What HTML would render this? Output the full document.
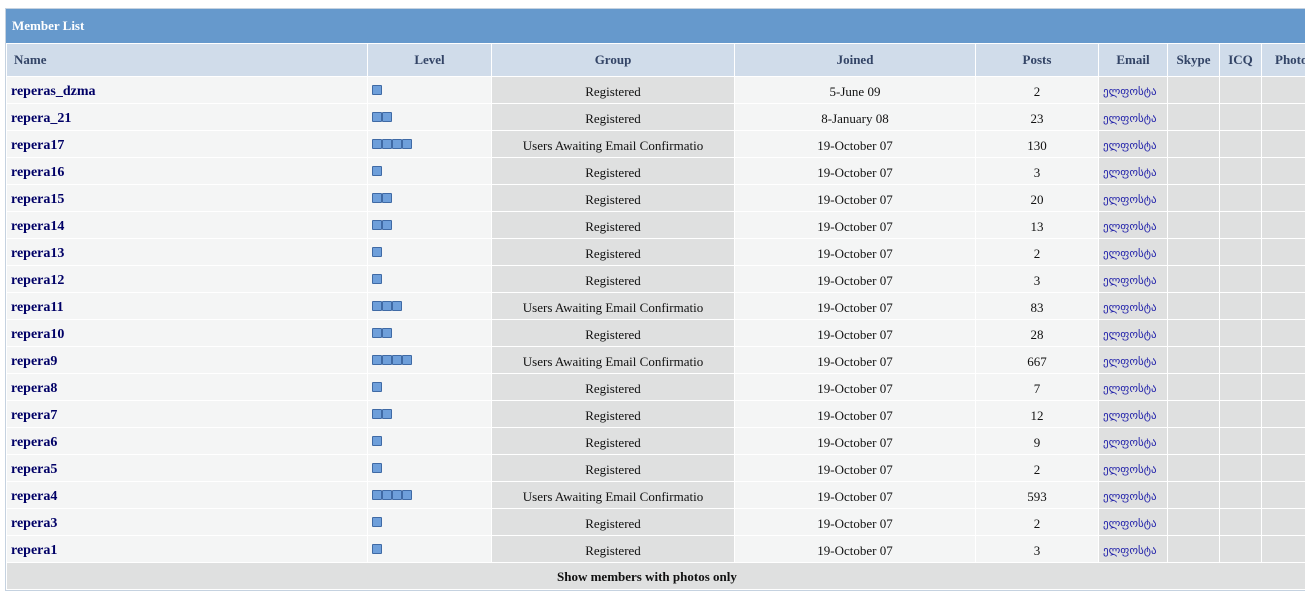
<!DOCTYPE html>
<html><head><meta charset="utf-8"><style>
body{margin:0;background:#fff;width:1305px;height:573px;overflow:hidden;font-family:"Liberation Serif","DejaVu Serif",serif;font-size:13px;}
.wrap{position:absolute;left:5px;top:8px;width:1340px;border:1px solid #c5d2e0;border-right:none;}
.title{height:34px;background:#6699cc;color:#fff;font-weight:bold;font-size:13px;line-height:34px;padding-left:6px;}
table{border-collapse:collapse;table-layout:fixed;width:1340px;}
td,th{border:1px solid #fff;height:26px;padding:0;text-align:center;color:#111;white-space:nowrap;overflow:hidden;}
td{height:23px;padding-top:3px;}
th{height:32px;background:#d0dcea;color:#334466;font-size:13px;font-weight:bold;}
th.n{text-align:left;padding-left:7px;}
tr td{background:#f4f5f5;}
td.d{background:#dfe0e0;}
td.n{text-align:left;padding-left:4px;font-weight:bold;color:#000066;font-size:14px;}
td.l{text-align:left;padding-left:4px;font-size:0;vertical-align:top;padding-top:8px;height:18px;}
td.e{text-align:left;padding-left:4px;color:#2222aa;font-family:"DejaVu Sans",sans-serif;font-size:11px;}
.p{display:inline-block;width:8px;height:8px;background:#6e9fda;border:1px solid #3f6aa5;border-radius:1px;}
.foot td{background:#dfe0e0;height:20px;font-weight:bold;}
</style></head><body>
<div class="wrap">
<div class="title">Member List</div>
<table>
<colgroup><col style="width:361px"><col style="width:124px"><col style="width:243px"><col style="width:241px"><col style="width:123px"><col style="width:69px"><col style="width:52px"><col style="width:42px"><col style="width:85px"></colgroup>
<tr><th class="n">Name</th><th>Level</th><th>Group</th><th>Joined</th><th>Posts</th><th>Email</th><th>Skype</th><th>ICQ</th><th style="text-align:left;padding-left:13px">Photo</th></tr>
<tr><td class="n">reperas_dzma</td><td class="l"><i class="p"></i></td><td class="d">Registered</td><td>5-June 09</td><td>2</td><td class="d e">ელფოსტა</td><td class="d"></td><td class="d"></td><td class="d"></td></tr>
<tr><td class="n">repera_21</td><td class="l"><i class="p"></i><i class="p"></i></td><td class="d">Registered</td><td>8-January 08</td><td>23</td><td class="d e">ელფოსტა</td><td class="d"></td><td class="d"></td><td class="d"></td></tr>
<tr><td class="n">repera17</td><td class="l"><i class="p"></i><i class="p"></i><i class="p"></i><i class="p"></i></td><td class="d">Users Awaiting Email Confirmatio</td><td>19-October 07</td><td>130</td><td class="d e">ელფოსტა</td><td class="d"></td><td class="d"></td><td class="d"></td></tr>
<tr><td class="n">repera16</td><td class="l"><i class="p"></i></td><td class="d">Registered</td><td>19-October 07</td><td>3</td><td class="d e">ელფოსტა</td><td class="d"></td><td class="d"></td><td class="d"></td></tr>
<tr><td class="n">repera15</td><td class="l"><i class="p"></i><i class="p"></i></td><td class="d">Registered</td><td>19-October 07</td><td>20</td><td class="d e">ელფოსტა</td><td class="d"></td><td class="d"></td><td class="d"></td></tr>
<tr><td class="n">repera14</td><td class="l"><i class="p"></i><i class="p"></i></td><td class="d">Registered</td><td>19-October 07</td><td>13</td><td class="d e">ელფოსტა</td><td class="d"></td><td class="d"></td><td class="d"></td></tr>
<tr><td class="n">repera13</td><td class="l"><i class="p"></i></td><td class="d">Registered</td><td>19-October 07</td><td>2</td><td class="d e">ელფოსტა</td><td class="d"></td><td class="d"></td><td class="d"></td></tr>
<tr><td class="n">repera12</td><td class="l"><i class="p"></i></td><td class="d">Registered</td><td>19-October 07</td><td>3</td><td class="d e">ელფოსტა</td><td class="d"></td><td class="d"></td><td class="d"></td></tr>
<tr><td class="n">repera11</td><td class="l"><i class="p"></i><i class="p"></i><i class="p"></i></td><td class="d">Users Awaiting Email Confirmatio</td><td>19-October 07</td><td>83</td><td class="d e">ელფოსტა</td><td class="d"></td><td class="d"></td><td class="d"></td></tr>
<tr><td class="n">repera10</td><td class="l"><i class="p"></i><i class="p"></i></td><td class="d">Registered</td><td>19-October 07</td><td>28</td><td class="d e">ელფოსტა</td><td class="d"></td><td class="d"></td><td class="d"></td></tr>
<tr><td class="n">repera9</td><td class="l"><i class="p"></i><i class="p"></i><i class="p"></i><i class="p"></i></td><td class="d">Users Awaiting Email Confirmatio</td><td>19-October 07</td><td>667</td><td class="d e">ელფოსტა</td><td class="d"></td><td class="d"></td><td class="d"></td></tr>
<tr><td class="n">repera8</td><td class="l"><i class="p"></i></td><td class="d">Registered</td><td>19-October 07</td><td>7</td><td class="d e">ელფოსტა</td><td class="d"></td><td class="d"></td><td class="d"></td></tr>
<tr><td class="n">repera7</td><td class="l"><i class="p"></i><i class="p"></i></td><td class="d">Registered</td><td>19-October 07</td><td>12</td><td class="d e">ელფოსტა</td><td class="d"></td><td class="d"></td><td class="d"></td></tr>
<tr><td class="n">repera6</td><td class="l"><i class="p"></i></td><td class="d">Registered</td><td>19-October 07</td><td>9</td><td class="d e">ელფოსტა</td><td class="d"></td><td class="d"></td><td class="d"></td></tr>
<tr><td class="n">repera5</td><td class="l"><i class="p"></i></td><td class="d">Registered</td><td>19-October 07</td><td>2</td><td class="d e">ელფოსტა</td><td class="d"></td><td class="d"></td><td class="d"></td></tr>
<tr><td class="n">repera4</td><td class="l"><i class="p"></i><i class="p"></i><i class="p"></i><i class="p"></i></td><td class="d">Users Awaiting Email Confirmatio</td><td>19-October 07</td><td>593</td><td class="d e">ელფოსტა</td><td class="d"></td><td class="d"></td><td class="d"></td></tr>
<tr><td class="n">repera3</td><td class="l"><i class="p"></i></td><td class="d">Registered</td><td>19-October 07</td><td>2</td><td class="d e">ელფოსტა</td><td class="d"></td><td class="d"></td><td class="d"></td></tr>
<tr><td class="n">repera1</td><td class="l"><i class="p"></i></td><td class="d">Registered</td><td>19-October 07</td><td>3</td><td class="d e">ელფოსტა</td><td class="d"></td><td class="d"></td><td class="d"></td></tr>
<tr class="foot"><td colspan="9" style="text-align:left;padding-left:550px;vertical-align:top;padding-top:6px">Show members with photos only</td></tr>
</table>
</div>
</body></html>
